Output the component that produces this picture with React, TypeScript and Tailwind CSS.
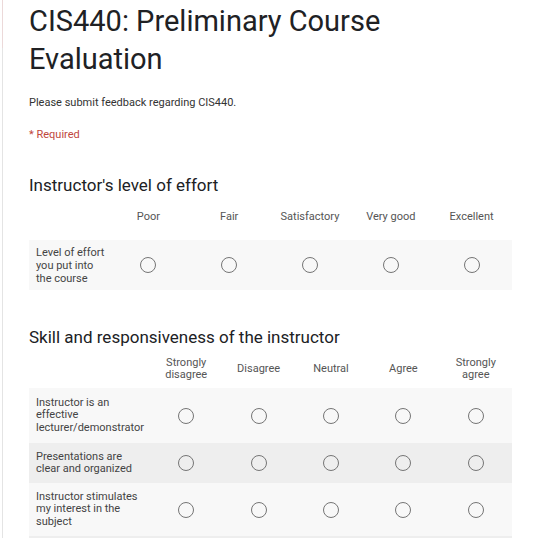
import React from "react";

const Radio = () => (
  <div className="flex items-center justify-center">
    <div className="w-[16px] h-[16px] rounded-full border-[1.5px] border-[#757575]" />
  </div>
);

const cols1 = ["Poor", "Fair", "Satisfactory", "Very good", "Excellent"];
const cols2 = [["Strongly", "disagree"], ["Disagree"], ["Neutral"], ["Agree"], ["Strongly", "agree"]];

const rows2 = [
  { lines: ["Instructor is an", "effective", "lecturer/demonstrator"], bg: "bg-[#f8f8f8]", h: "h-[55px]" },
  { lines: ["Presentations are", "clear and organized"], bg: "bg-[#eeeeee]", h: "h-[40px]" },
  { lines: ["Instructor stimulates", "my interest in the", "subject"], bg: "bg-[#f8f8f8]", h: "h-[53px]" },
  { lines: [], bg: "bg-[#eeeeee]", h: "h-[40px]" },
];

export default function App() {
  return (
    <div className="w-[540px] h-[538px] overflow-hidden bg-white flex" style={{ fontFamily: "Roboto, 'Liberation Sans', sans-serif" }}>
      <div className="w-[2px] shrink-0" />
      <div className="w-[1px] shrink-0 flex flex-col">
        <div className="h-[48px] bg-[#ecd9d9]" />
        <div className="flex-1 bg-[#e4e4e4]" />
      </div>
      <div className="flex-1 pl-[26px] pr-[28px]">
        <h1 className="pt-[2px] text-[29px] leading-[38px] text-[#202124] font-normal">
          CIS440: Preliminary Course
          <br />
          Evaluation
        </h1>
        <p className="mt-[17px] text-[11px] leading-[16px] text-[#333]">Please submit feedback regarding CIS440.</p>
        <p className="mt-[16px] text-[11px] leading-[16px] text-[#c0463c]">* Required</p>

        <h2 className="mt-[30px] text-[17px] leading-[24px] text-[#202124]">Instructor's level of effort</h2>
        <div className="mt-[10px] h-[20px] grid grid-cols-[79px_repeat(5,1fr)] items-center text-[11px] text-[#555] text-center">
          <div />
          {cols1.map((c) => (
            <div key={c}>{c}</div>
          ))}
        </div>
        <div className="mt-[13px] h-[50px] grid grid-cols-[79px_repeat(5,1fr)] items-center bg-[#f8f8f8]">
          <div className="pl-[7px] text-[11px] leading-[13px] text-[#444]">
            Level of effort
            <br />
            you put into
            <br />
            the course
          </div>
          {cols1.map((c) => (
            <Radio key={c} />
          ))}
        </div>

        <h2 className="mt-[35px] text-[17px] leading-[24px] text-[#202124]">Skill and responsiveness of the instructor</h2>
        <div className="mt-[6px] h-[28px] grid grid-cols-[121px_repeat(5,1fr)] items-center text-[11px] leading-[12.5px] text-[#555] text-center">
          <div />
          {cols2.map((c) => (
            <div key={c.join(" ")}>
              {c.map((l, i) => (
                <div key={i}>{l}</div>
              ))}
            </div>
          ))}
        </div>
        <div className="mt-[5px]">
          {rows2.map((r, idx) => (
            <div key={idx} className={`${r.h} ${r.bg} grid grid-cols-[121px_repeat(5,1fr)] items-center`}>
              <div className="pl-[7px] text-[11px] leading-[12.5px] text-[#444]">
                {r.lines.map((l, i) => (
                  <div key={i}>{l}</div>
                ))}
              </div>
              {r.lines.length > 0 && cols2.map((c) => <Radio key={c.join(" ")} />)}
            </div>
          ))}
        </div>
      </div>
    </div>
  );
}
